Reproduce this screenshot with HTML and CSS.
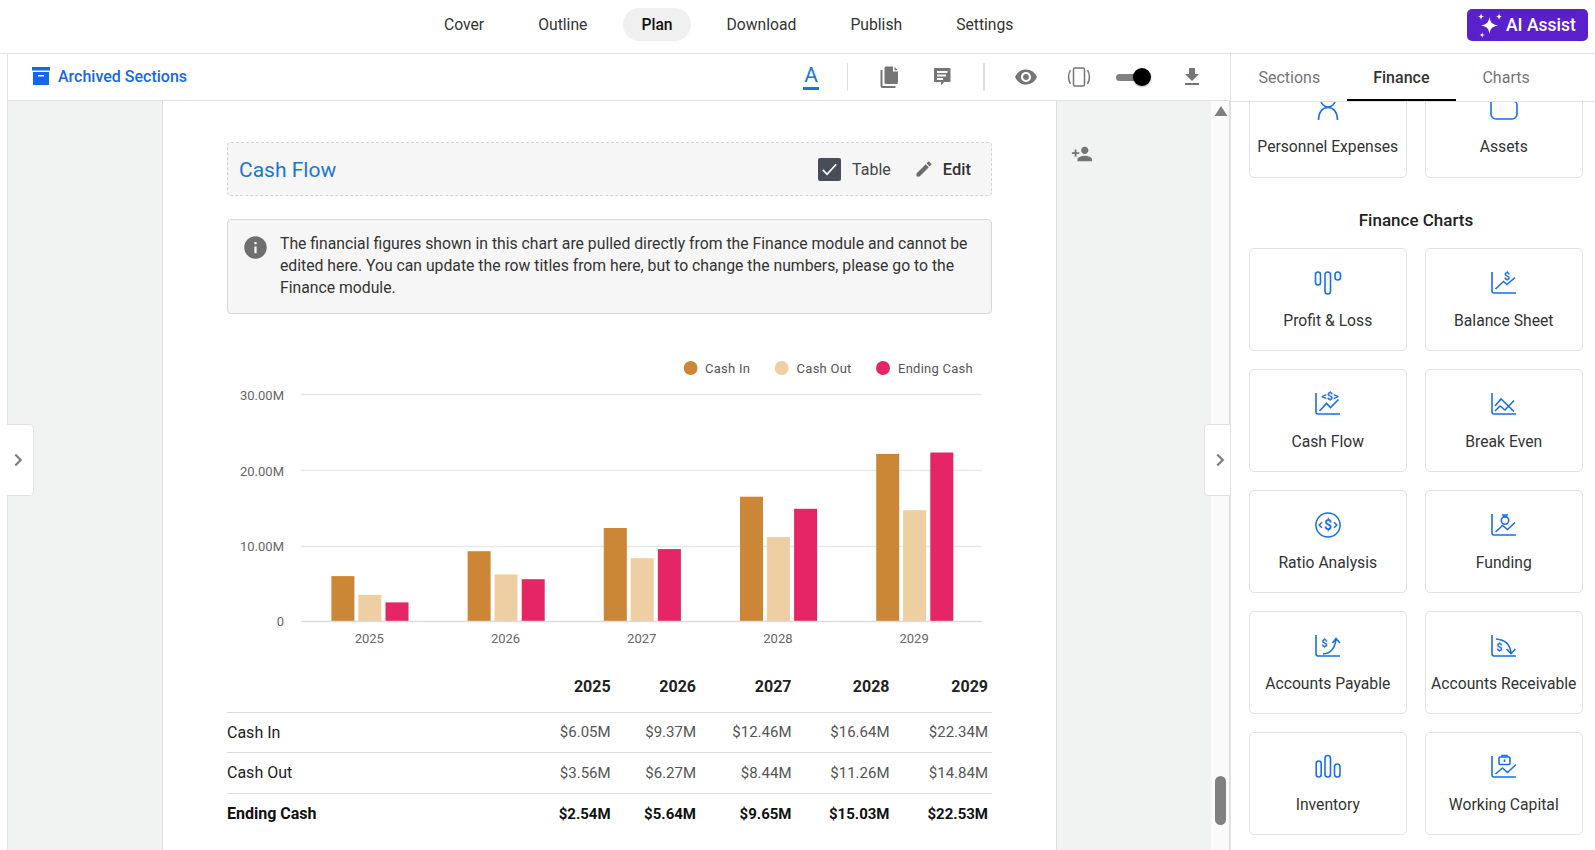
FILE: index.html
```html
<!DOCTYPE html>
<html lang="en">
<head>
<meta charset="utf-8">
<title>Plan - Cash Flow</title>
<link rel="stylesheet" href="styles.css">
</head>
<body>
<header class="topbar">
  <nav class="main-nav">
    <a class="nav-item">Cover</a>
    <a class="nav-item">Outline</a>
    <a class="nav-item is-active">Plan</a>
    <a class="nav-item">Download</a>
    <a class="nav-item">Publish</a>
    <a class="nav-item">Settings</a>
  </nav>
  <button class="ai-btn">
    <svg class="ai-icon" viewBox="0 0 24 24" width="27" height="27"><path d="M12 4.500c.8 5 2.500 6.700 7.500 7.500-5 .8-6.700 2.500-7.500 7.500-.8-5-2.500-6.700-7.500-7.500 5-.8 6.700-2.500 7.500-7.500z"/><path d="M4.500 1c.3 2 1 2.700 3 3-2 .3-2.700 1-3 3-.3-2-1-2.700-3-3 2-.3 2.700-1 3-3z"/><path d="M20.500 1c.3 2 1 2.700 3 3-2 .3-2.700 1-3 3-.3-2-1-2.700-3-3 2-.3 2.700-1 3-3z"/><path d="M5.500 18c.25 1.700.8 2.250 2.500 2.500-1.700.25-2.250.8-2.500 2.500-.25-1.700-.8-2.250-2.500-2.500 1.700-.25 2.250-.8 2.500-2.500z"/></svg>
    <span>AI Assist</span>
  </button>
</header>

<div class="workspace">
  <div class="left-edge"></div>

  <main class="center">
    <div class="toolbar">
      <a class="archived">
        <svg class="archive-icon" viewBox="0 0 18 18" width="18" height="18"><path d="M0 0h18v3.500H0z"/><path fill-rule="evenodd" d="M1 5h16v13H1zM6 8v1.600h6V8z"/></svg>
        <span>Archived Sections</span>
      </a>
      <div class="tools">
        <span class="tool-a">A</span>
        <i class="tool-sep"></i>
        <svg class="tool-icon" viewBox="0 0 24 24"><path d="M9 1.500h7v5h5v11a1.500 1.500 0 0 1-1.500 1.500H9a1.500 1.500 0 0 1-1.500-1.500V3A1.500 1.500 0 0 1 9 1.500zM17.500 1.800l3.300 3.500h-3.300z"/><path d="M3.500 5h2v16h13v2H5.500a2 2 0 0 1-2-2z"/></svg>
        <svg class="tool-icon" viewBox="0 0 24 24"><path fill-rule="evenodd" d="M5 3h14.500a1 1 0 0 1 1 1v12a1 1 0 0 1-1 1h-5.500l-3 3.500V17H5a1 1 0 0 1-1-1V4a1 1 0 0 1 1-1zm2 3v2h10.500V6zm0 3.500v2h9v-2zm0 3.500v2h6v-2z"/></svg>
        <i class="tool-sep tool-sep-wide"></i>
        <svg class="tool-icon tool-eye" viewBox="0 0 24 24"><path d="M12 4.500C7 4.500 2.730 7.610 1 12c1.730 4.390 6 7.500 11 7.500s9.270-3.110 11-7.500c-1.730-4.390-6-7.500-11-7.500zM12 17c-2.760 0-5-2.240-5-5s2.240-5 5-5 5 2.240 5 5-2.240 5-5 5zm0-8c-1.660 0-3 1.340-3 3s1.340 3 3 3 3-1.340 3-3-1.340-3-3-3z"/></svg>
        <svg class="tool-icon tool-line" viewBox="0 0 24 24"><rect x="6.500" y="3" width="11" height="18" rx="1.500"/><path d="M3.500 5C1 9.500 1 14.500 3.500 19M20.500 5c2.500 4.500 2.500 9.500 0 14"/></svg>
        <span class="switch"><i class="switch-thumb"></i></span>
        <svg class="tool-icon" viewBox="0 0 24 24"><path d="M19 9h-4V3H9v6H5l7 7 7-7zM5 18v2h14v-2H5z"/></svg>
      </div>
    </div>

    <div class="canvas">
      <div class="gutter"></div>
      <article class="page">
        <div class="section-head">
          <h2 class="section-title">Cash Flow</h2>
          <div class="section-actions">
            <span class="checkbox"><svg viewBox="0 0 24 24" width="23" height="23"><path d="M5 12.500l4.500 4.500 9.500-10.500" /></svg></span>
            <span class="table-label">Table</span>
            <svg class="pencil" viewBox="0 0 24 24" width="20" height="20"><path d="M3 17.250V21h3.750L17.810 9.940l-3.750-3.750L3 17.250zM20.710 7.040c.39-.39.39-1.020 0-1.410l-2.340-2.340c-.39-.39-1.020-.39-1.410 0l-1.830 1.830 3.750 3.750 1.830-1.830z"/></svg>
            <span class="edit-label">Edit</span>
          </div>
        </div>

        <div class="notice">
          <svg class="notice-icon" viewBox="0 0 24 24" width="27" height="27"><path d="M12 2C6.480 2 2 6.480 2 12s4.480 10 10 10 10-4.480 10-10S17.520 2 12 2zm1 15h-2v-6h2v6zm0-8h-2V7h2v2z"/></svg>
          <p class="notice-text">The financial figures shown in this chart are pulled directly from the Finance module and cannot be edited here. You can update the row titles from here, but to change the numbers, please go to the Finance module.</p>
        </div>

        <svg class="chart" viewBox="0 0 765 310" width="765" height="310">
          <circle class="c-in" cx="463.600" cy="18" r="7"/><text class="legend" x="478" y="22.500">Cash In</text>
          <circle class="c-out" cx="554.700" cy="18" r="7"/><text class="legend" x="569.600" y="22.500">Cash Out</text>
          <circle class="c-end" cx="656" cy="18" r="7"/><text class="legend" x="671" y="22.500">Ending Cash</text>

          <path class="grid" d="M74 44.500H755M74 120.500H755M74 196.500H755"/>

          <text class="axis axis-y" x="57" y="50">30.00M</text>
          <text class="axis axis-y" x="57" y="126">20.00M</text>
          <text class="axis axis-y" x="57" y="201">10.00M</text>
          <text class="axis axis-y" x="57" y="276">0</text>

          <g class="bars c-in">
            <rect x="104.400" y="225.600" width="23" height="45.400"/>
            <rect x="240.600" y="200.700" width="23" height="70.300"/>
            <rect x="376.800" y="177.500" width="23" height="93.500"/>
            <rect x="513" y="146.200" width="23" height="124.800"/>
            <rect x="649.200" y="103.400" width="23" height="167.600"/>
          </g>
          <g class="bars c-out">
            <rect x="131.300" y="244.300" width="23" height="26.700"/>
            <rect x="267.500" y="224" width="23" height="47"/>
            <rect x="403.700" y="207.700" width="23" height="63.300"/>
            <rect x="539.900" y="186.500" width="23" height="84.500"/>
            <rect x="676.100" y="159.700" width="23" height="111.300"/>
          </g>
          <g class="bars c-end">
            <rect x="158.500" y="251.900" width="23" height="19.100"/>
            <rect x="294.700" y="228.700" width="23" height="42.300"/>
            <rect x="430.900" y="198.600" width="23" height="72.400"/>
            <rect x="567.100" y="158.300" width="23" height="112.700"/>
            <rect x="703.300" y="102" width="23" height="169"/>
          </g>
          <path class="base" d="M74 271.500H755"/>

          <text class="axis axis-x" x="142.300" y="292.500">2025</text>
          <text class="axis axis-x" x="278.500" y="292.500">2026</text>
          <text class="axis axis-x" x="414.700" y="292.500">2027</text>
          <text class="axis axis-x" x="550.900" y="292.500">2028</text>
          <text class="axis axis-x" x="687.100" y="292.500">2029</text>
        </svg>

        <table class="fin-table">
          <colgroup><col class="col-label"><col class="col-a"><col class="col-b"><col class="col-c"><col class="col-d"><col class="col-e"></colgroup>
          <thead>
            <tr><th></th><th>2025</th><th>2026</th><th>2027</th><th>2028</th><th>2029</th></tr>
          </thead>
          <tbody>
            <tr><td>Cash In</td><td>$6.05M</td><td>$9.37M</td><td>$12.46M</td><td>$16.64M</td><td>$22.34M</td></tr>
            <tr><td>Cash Out</td><td>$3.56M</td><td>$6.27M</td><td>$8.44M</td><td>$11.26M</td><td>$14.84M</td></tr>
            <tr class="row-total"><td>Ending Cash</td><td>$2.54M</td><td>$5.64M</td><td>$9.65M</td><td>$15.03M</td><td>$22.53M</td></tr>
          </tbody>
        </table>
      </article>
      <div class="gutter gutter-right">
        <svg class="add-user" viewBox="0 0 24 24" width="22" height="22"><path d="M15 12c2.210 0 4-1.790 4-4s-1.790-4-4-4-4 1.790-4 4 1.790 4 4 4zm-9-2V7H4v3H1v2h3v3h2v-3h3v-2H6zm9 4c-2.670 0-8 1.340-8 4v2h16v-2c0-2.660-5.330-4-8-4z"/></svg>
      </div>
      <div class="scrollbar">
        <svg class="scroll-up" viewBox="0 0 14 10" width="14" height="10"><path d="M7 0l6.500 10H.5z"/></svg>
        <i class="scroll-thumb"></i>
      </div>
    </div>

    <button class="pull-tab pull-left"><svg viewBox="0 0 24 24" width="22" height="22"><path d="M9 6l6 6-6 6"/></svg></button>
    <button class="pull-tab pull-right"><svg viewBox="0 0 24 24" width="22" height="22"><path d="M9 6l6 6-6 6"/></svg></button>
  </main>

  <aside class="panel">
    <div class="tabs">
      <a class="tab">Sections</a>
      <a class="tab is-active">Finance</a>
      <a class="tab">Charts</a>
    </div>
    <div class="panel-scroll">
      <div class="cards cards-top">
        <div class="card">
          <svg class="card-icon" viewBox="0 0 28 26"><circle cx="14" cy="4" r="7"/><path d="M4.500 24c0-8 4-12.500 9.500-12.500s9.500 4.500 9.500 12.500"/></svg>
          <span>Personnel Expenses</span>
        </div>
        <div class="card">
          <svg class="card-icon" viewBox="0 0 28 26"><path d="M1 0v18a5 5 0 0 0 5 5h16a5 5 0 0 0 5-5v-9a4 4 0 0 0-4-4H8"/></svg>
          <span>Assets</span>
        </div>
      </div>

      <h3 class="panel-title">Finance Charts</h3>

      <div class="cards">
        <div class="card">
          <svg class="card-icon" viewBox="0 0 28 26"><rect x="1.500" y="2" width="5" height="13" rx="2.500"/><rect x="11" y="2" width="5.500" height="22" rx="2.700"/><rect x="21" y="2" width="5.500" height="8" rx="2.700"/></svg>
          <span>Profit &amp; Loss</span>
        </div>
        <div class="card">
          <svg class="card-icon" viewBox="0 0 28 26"><path d="M2 2v19a2 2 0 0 0 2 2h22"/><path d="M5.500 19l8-7.500 3.500 3 8-7"/><text class="icon-text" x="17" y="9.500">$</text></svg>
          <span>Balance Sheet</span>
        </div>
        <div class="card">
          <svg class="card-icon" viewBox="0 0 28 26"><path d="M2 2v19a2 2 0 0 0 2 2h22"/><path d="M5.500 20l7-7.500 4 4 8-8"/><text class="icon-text" x="16" y="9">&lt;$&gt;</text></svg>
          <span>Cash Flow</span>
        </div>
        <div class="card">
          <svg class="card-icon" viewBox="0 0 28 26"><path d="M2 2v19a2 2 0 0 0 2 2h22"/><path d="M5 15l6-7 13 12.500M5 20l5-5 5 4 9-9.500"/></svg>
          <span>Break Even</span>
        </div>
        <div class="card">
          <svg class="card-icon" viewBox="0 0 28 28"><circle cx="14" cy="14" r="13"/><path d="M7.500 11l-3 3 3 3M20.500 11l3 3-3 3"/><text class="icon-text icon-text-lg" x="14" y="19">$</text></svg>
          <span>Ratio Analysis</span>
        </div>
        <div class="card">
          <svg class="card-icon" viewBox="0 0 28 26"><path d="M2 2v19a2 2 0 0 0 2 2h22"/><path d="M5.500 20l7-6.500 5 4 7.500-7"/><circle cx="15" cy="8.500" r="3.700"/><path d="M13 3h4l-1 2h-2z"/></svg>
          <span>Funding</span>
        </div>
        <div class="card">
          <svg class="card-icon" viewBox="0 0 28 26"><path d="M2 2v19a2 2 0 0 0 2 2h22"/><path d="M9 21c7-.5 12-5 13-15M18.500 10l3.500-4.500 4 4.500"/><text class="icon-text" x="10.500" y="14">$</text></svg>
          <span>Accounts Payable</span>
        </div>
        <div class="card">
          <svg class="card-icon" viewBox="0 0 28 26"><path d="M2 2v19a2 2 0 0 0 2 2h22"/><path d="M6 6c8 .5 14 5 15 14M16.500 16l4.500 4.500 4.500-4.500"/><text class="icon-text" x="9.500" y="18">$</text></svg>
          <span>Accounts Receivable</span>
        </div>
        <div class="card">
          <svg class="card-icon" viewBox="0 0 28 26"><rect x="2.200" y="7" width="5" height="16" rx="2.500"/><rect x="11" y="1.500" width="5.500" height="21.500" rx="2.700"/><rect x="20.500" y="10" width="5.500" height="13" rx="2.700"/></svg>
          <span>Inventory</span>
        </div>
        <div class="card">
          <svg class="card-icon" viewBox="0 0 28 26"><path d="M2 2v19a2 2 0 0 0 2 2h22"/><path d="M5.500 20l7-6 5 4.500 8.500-8"/><rect x="9" y="3" width="11" height="7.500" rx="1"/><path d="M12 3V1.500h5V3M14.500 5.500v2.500"/></svg>
          <span>Working Capital</span>
        </div>
      </div>
    </div>
  </aside>
</div>
</body>
</html>
```

FILE: styles.css
```css
* { box-sizing: border-box; }
html, body { margin: 0; height: 850px; overflow: hidden; background: #fff; }
body { font-family: Roboto, "Liberation Sans", sans-serif; font-size: 16px; color: #333; }
svg { display: block; flex: none; }

/* top bar */
.topbar { height: 54px; display: flex; align-items: flex-start; padding: 8px 7px 0 426px; border-bottom: 1px solid #e2e2e2; }
.main-nav { display: flex; gap: 18px; }
.nav-item { height: 33px; line-height: 33px; padding: 0 18px; border-radius: 17px; color: #333; font-size: 15.700px; }
.nav-item.is-active { background: #f0f0f1; font-weight: 500; color: #111; }
.ai-btn { margin: 1px 0 0 auto; width: 121px; height: 32px; display: flex; align-items: center; gap: 3px; padding: 0 0 0 9px; border: 0; border-radius: 5px; background: #5a20cb; color: #fff; font: 500 17.500px Roboto, sans-serif; }
.ai-icon { fill: #fff; }

/* workspace */
.workspace { display: flex; height: 796px; }
.left-edge { width: 8px; border-right: 1px solid #e2e2e2; }
.center { position: relative; width: 1222px; display: flex; flex-direction: column; }

.toolbar { height: 47px; flex: none; display: flex; align-items: center; justify-content: space-between; padding: 0 26px 0 24px; border-bottom: 1px solid #e2e2e2; }
.archived { display: flex; align-items: center; gap: 8px; padding-bottom: 2px; color: #1467ec; font-weight: 500; font-size: 16px; }
.archive-icon { fill: #1467ec; }
.tools { display: flex; align-items: center; height: 46px; }
.tool-a { width: 16px; margin-right: 28px; font-size: 21px; line-height: 21px; padding-bottom: 1px; text-align: center; color: #1976d2; border-bottom: 3px solid #1976d2; }
.tool-sep { width: 1px; height: 28px; margin-right: 29px; background: #e0e0e0; }
.tool-sep-wide { width: 2px; margin-right: 29px; }
.tool-icon { width: 24px; height: 24px; margin-right: 29px; fill: #757575; }
.tool-icon:last-child { margin-right: 0; }
.tool-line { fill: none; stroke: #757575; stroke-width: 1.500; margin-right: 25px; }
.switch { position: relative; width: 35px; height: 7px; margin-right: 29px; }
.switch::before { content: ""; position: absolute; left: 0; top: 0; width: 26px; height: 7px; border-radius: 4px; background: #808080; }
.switch-thumb { position: absolute; right: 0; top: -6px; width: 18px; height: 18px; border-radius: 50%; background: #000; box-shadow: 0 1px 2px rgba(0,0,0,.3); }

.canvas { flex: 1; min-height: 0; display: flex; background: #f1f3f2; overflow: hidden; }
.gutter { width: 154px; flex: none; }
.gutter-right { padding: 42px 0 0 14px; }
.add-user { fill: #757575; }
.page { width: 895px; flex: none; padding: 41px 64px 0; background: #fff; border-left: 1px solid #dedede; border-right: 1px solid #dedede; }

.section-head { height: 54px; display: flex; align-items: center; justify-content: space-between; padding: 0 20px 0 11px; background: #f6f6f6; border: 1px dashed #d4d4d4; border-radius: 4px; }
.section-title { margin: 0; padding-top: 1px; font-size: 21px; font-weight: 400; color: #1976d2; }
.section-actions { display: flex; align-items: center; }
.checkbox { width: 23px; height: 23px; margin-right: 11px; border-radius: 2px; background: #474d59; }
.checkbox svg { fill: none; stroke: #fff; stroke-width: 1.800; }
.table-label { margin-right: 23px; color: #444; }
.pencil { fill: #6b6b6b; margin-right: 9px; }
.edit-label { padding-top: 1px; font-size: 16.500px; font-weight: 500; color: #333; }

.notice { height: 95px; margin-top: 23px; display: flex; align-items: flex-start; padding: 13px 12px 0 14px; background: #f6f6f6; border: 1px solid #d8d8d8; border-radius: 4px; }
.notice-icon { fill: #6f6f6f; margin: 1px 11px 0 0; }
.notice-text { margin: 0; font-size: 15.750px; line-height: 22px; color: #333; }

.chart { margin-top: 36px; }
.c-in { fill: #cc8736; }
.c-out { fill: #edcfa3; }
.c-end { fill: #e52565; }
.bars { transform: translateY(.5px); }
.legend { font-size: 13px; letter-spacing: .25px; fill: #555; }
.grid { stroke: #e8e8e8; stroke-width: 1.500; fill: none; }
.base { stroke: #dcdcdc; stroke-width: 1.500; fill: none; }
.axis { font-size: 13px; fill: #666; }
.axis-y { text-anchor: end; }
.axis-x { text-anchor: middle; }

.fin-table { width: 765px; border-collapse: collapse; table-layout: fixed; }
.col-label { width: 300px; }
.col-a { width: 87.600px; }
.col-b { width: 85.400px; }
.col-c { width: 95.500px; }
.col-d { width: 98px; }
.col-e { width: 98.500px; }
.fin-table th { height: 52px; padding: 2px 4px 0 0; text-align: right; font-weight: 700; color: #222; }
.fin-table td { height: 40.500px; padding: 0 4px 0 0; text-align: right; font-size: 15px; color: #555; border-top: 1px solid #dcdcdc; }
.fin-table td:first-child { padding: 0; text-align: left; font-size: 16px; color: #222; }
.row-total td, .fin-table .row-total td:first-child { font-weight: 700; color: #111; }

.scrollbar { position: relative; width: 19px; flex: none; background: #fafafa; border-right: 1px solid #dedede; }
.scroll-up { position: absolute; left: 3px; top: 5px; fill: #808080; }
.scroll-thumb { position: absolute; left: 4px; top: 675px; width: 11px; height: 49px; border-radius: 6px; background: #808080; }

.pull-tab { position: absolute; top: 370px; height: 72px; padding: 0; display: flex; align-items: center; justify-content: center; background: #fff; border: 1px solid #e2e2e2; }
.pull-tab svg { fill: none; stroke: #808080; stroke-width: 2.500; }
.pull-left { left: -1px; width: 27px; padding-right: 4px; border-left: 0; border-radius: 0 5px 5px 0; }
.pull-right { right: 0; width: 26px; padding-left: 4px; border-right: 0; border-radius: 5px 0 0 5px; }

/* right panel */
.panel { width: 365px; flex: none; display: flex; flex-direction: column; border-left: 1px solid #e2e2e2; }
.tabs { height: 48px; flex: none; display: flex; padding-left: 1px; border-bottom: 1px solid #e2e2e2; }
.tab { height: 47px; line-height: 47px; padding: 0 26.500px; color: #757575; }
.tab.is-active { color: #333; font-weight: 500; border-bottom: 2px solid #000; }
.panel-scroll { flex: 1; min-height: 0; overflow: hidden; padding: 0 12px 0 18px; }
.cards { display: grid; grid-template-columns: 157.500px 157.500px; column-gap: 18.500px; row-gap: 18px; }
.cards-top { margin-top: -27px; }
.cards-top .card { padding-top: 20px; }
.card { height: 103px; display: flex; flex-direction: column; align-items: center; padding-top: 21px; background: #fff; border: 1px solid #e2e2e2; border-radius: 5px; color: #333; white-space: nowrap; font-size: 15.700px; }
.card span { margin-top: 15px; line-height: 19px; }
.card-icon { width: 28px; height: 26px; fill: none; stroke: #1a6fe8; stroke-width: 1.600; }
.icon-text { font: 700 11px Roboto, sans-serif; fill: #1a6fe8; stroke: none; text-anchor: middle; }
.icon-text-lg { font-size: 15px; }
.panel-title { margin: 33px 0 18px; font-size: 17px; line-height: 19px; font-weight: 500; text-align: center; color: #222; }
```
